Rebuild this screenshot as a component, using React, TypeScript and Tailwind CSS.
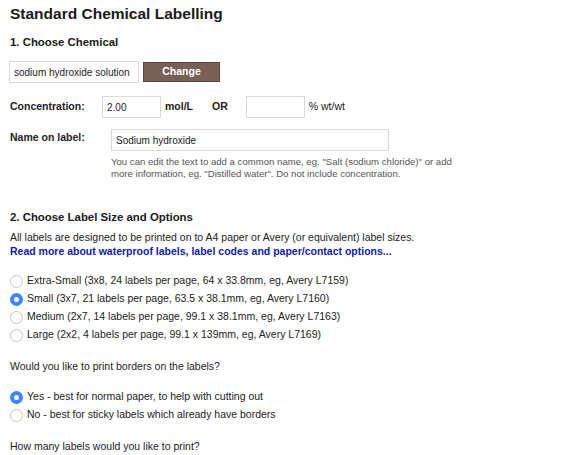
import { useState } from 'react';

const sizes = [
  'Extra-Small (3x8, 24 labels per page, 64 x 33.8mm, eg, Avery L7159)',
  'Small (3x7, 21 labels per page, 63.5 x 38.1mm, eg, Avery L7160)',
  'Medium (2x7, 14 labels per page, 99.1 x 38.1mm, eg, Avery L7163)',
  'Large (2x2, 4 labels per page, 99.1 x 139mm, eg, Avery L7169)',
];

const borders = [
  'Yes - best for normal paper, to help with cutting out',
  'No - best for sticky labels which already have borders',
];

function Radio({ checked, label, onClick }: { checked: boolean; label: string; onClick: () => void }) {
  return (
    <label className="flex items-center h-[18px] cursor-pointer" onClick={onClick}>
      {checked ? (
        <span className="w-[13px] h-[13px] rounded-full bg-[#3b88f5] flex items-center justify-center shrink-0">
          <span className="w-[5px] h-[5px] rounded-full bg-white" />
        </span>
      ) : (
        <span className="w-[13px] h-[13px] rounded-full border border-[#c4c4c4] bg-white shrink-0" />
      )}
      <span className="ml-[4px]">{label}</span>
    </label>
  );
}

export default function App() {
  const [size, setSize] = useState(1);
  const [border, setBorder] = useState(0);
  const [name, setName] = useState('Sodium hydroxide');

  return (
    <div
      className="w-[588px] h-[455px] overflow-hidden bg-white text-[#222] text-[10.5px] px-[10px] pt-[5px]"
      style={{ fontFamily: '"Liberation Sans", Arial, sans-serif' }}
    >
      <h1 className="text-[15.5px] font-bold leading-[18px] text-[#1a1a1a]">Standard Chemical Labelling</h1>

      {/* Section 1 */}
      <h2 className="mt-[12px] text-[11.4px] font-bold leading-[14px] text-[#1a1a1a]">1. Choose Chemical</h2>

      <div className="mt-[12px] flex items-center -ml-[1px]">
        <input
          readOnly
          value="sodium hydroxide solution"
          className="w-[130px] h-[22px] px-[4px] border border-[#d9d9d9] text-[10px] text-[#222] outline-none"
        />
        <button className="ml-[4px] w-[77px] h-[20px] bg-[#7a5f57] border border-[#5e4841] text-white font-bold text-[10.5px]">
          Change
        </button>
      </div>

      <div className="mt-[13px] flex items-center h-[22px]">
        <span className="w-[92px] font-bold">Concentration:</span>
        <input
          defaultValue="2.00"
          className="w-[59px] h-[22px] px-[4px] border border-[#d9d9d9] text-[10px] outline-none"
        />
        <span className="ml-[4px] font-bold">mol/L</span>
        <span className="ml-[19px] font-bold">OR</span>
        <input className="ml-[18px] w-[59px] h-[22px] px-[4px] border border-[#d9d9d9] text-[10px] outline-none" />
        <span className="ml-[4px]">% wt/wt</span>
      </div>

      <div className="mt-[11px] flex">
        <span className="w-[101px] font-bold pt-[1px]">Name on label:</span>
        <div className="flex flex-col">
          <input
            value={name}
            onChange={(e) => setName(e.target.value)}
            className="w-[278px] h-[22px] px-[4px] border border-[#d9d9d9] text-[10px] outline-none"
          />
          <p className="mt-[5px] text-[9.6px] leading-[12px] text-[#555] whitespace-nowrap">
            You can edit the text to add a common name, eg. "Salt (sodium chloride)" or add
            <br />
            more information, eg. "Distilled water". Do not include concentration.
          </p>
        </div>
      </div>

      {/* Section 2 */}
      <h2 className="mt-[30px] text-[11.4px] font-bold leading-[14px] text-[#1a1a1a]">2. Choose Label Size and Options</h2>
      <p className="mt-[6px] leading-[14px]">
        All labels are designed to be printed on to A4 paper or Avery (or equivalent) label sizes.
      </p>
      <a href="#" className="block font-bold text-[#1020a8] leading-[14px]">
        Read more about waterproof labels, label codes and paper/contact options...
      </a>

      <div className="mt-[14px] flex flex-col">
        {sizes.map((s, i) => (
          <Radio key={s} checked={size === i} label={s} onClick={() => setSize(i)} />
        ))}
      </div>

      <p className="mt-[15px] leading-[14px]">Would you like to print borders on the labels?</p>

      <div className="mt-[15px] flex flex-col">
        {borders.map((b, i) => (
          <Radio key={b} checked={border === i} label={b} onClick={() => setBorder(i)} />
        ))}
      </div>

      <p className="mt-[15px] leading-[14px]">How many labels would you like to print?</p>
    </div>
  );
}
